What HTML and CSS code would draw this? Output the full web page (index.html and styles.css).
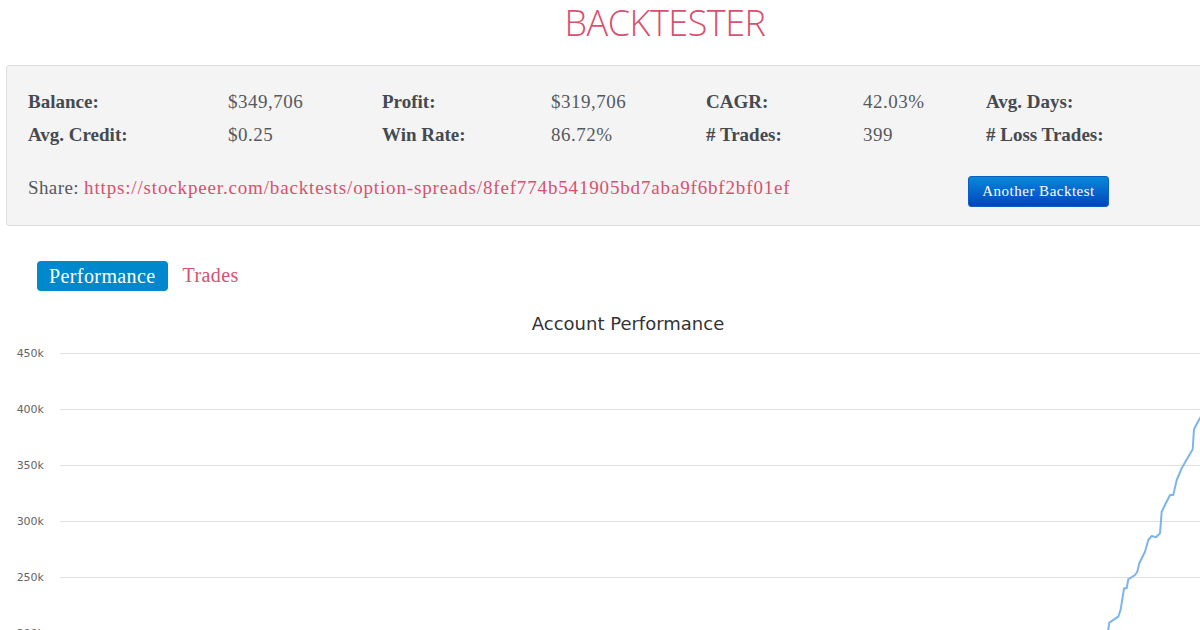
FILE: index.html
```html
<!DOCTYPE html>
<html>
<head>
<meta charset="utf-8">
<link rel="stylesheet" href="styles.css">
</head>
<body>
<div class="page">
  <h1 class="title">BACKTESTER</h1>
  <section class="panel">
    <div class="stats">
      <span class="lbl">Balance:</span><span class="val">$349,706</span>
      <span class="lbl">Profit:</span><span class="val">$319,706</span>
      <span class="lbl">CAGR:</span><span class="val">42.03%</span>
      <span class="lbl">Avg. Days:</span><span class="val"></span>
      <span class="lbl">Avg. Credit:</span><span class="val">$0.25</span>
      <span class="lbl">Win Rate:</span><span class="val">86.72%</span>
      <span class="lbl"># Trades:</span><span class="val">399</span>
      <span class="lbl"># Loss Trades:</span><span class="val"></span>
    </div>
    <div class="share-row">
      <div class="share">Share: <a class="link" href="#">https://stockpeer.com/backtests/option-spreads/8fef774b541905bd7aba9f6bf2bf01ef</a></div>
      <button class="btn">Another Backtest</button>
    </div>
  </section>
  <nav class="tabs">
    <span class="tab active">Performance</span>
    <span class="tab">Trades</span>
  </nav>
  <div class="chart">
    <svg width="1200" height="330" viewBox="0 0 1200 330">
      <text class="ctitle" x="628" y="30" text-anchor="middle">Account Performance</text>
      <g class="grid">
        <line x1="60" y1="53.5" x2="1200" y2="53.5"/>
        <line x1="60" y1="109.5" x2="1200" y2="109.5"/>
        <line x1="60" y1="165.5" x2="1200" y2="165.5"/>
        <line x1="60" y1="221.5" x2="1200" y2="221.5"/>
        <line x1="60" y1="277.5" x2="1200" y2="277.5"/>
        <line x1="60" y1="333.5" x2="1200" y2="333.5"/>
      </g>
      <g class="ylab">
        <text x="44" y="57" text-anchor="end">450k</text>
        <text x="44" y="113" text-anchor="end">400k</text>
        <text x="44" y="169" text-anchor="end">350k</text>
        <text x="44" y="225" text-anchor="end">300k</text>
        <text x="44" y="281" text-anchor="end">250k</text>
        <text x="44" y="337" text-anchor="end">200k</text>
      </g>
      <path class="series" d="M1108 332 L1108.3 329.3 L1109.3 322.7 L1118.3 316.7 L1120.7 309.3 L1124 288.3 L1126.7 288.3 L1128.3 279.3 L1135 275 L1137.3 271.7 L1139.3 263.3 L1145 251.7 L1148.3 240 L1151.7 236 L1156 237.3 L1160 233.3 L1161.7 211.7 L1165 205 L1170 195 L1173.3 195 L1176.7 180 L1181.7 168.3 L1188.3 156.7 L1192.7 149.3 L1194 129.3 L1196.7 124 L1200 118.3 L1203 113"/>
    </svg>
  </div>
</div>
</body>
</html>
```

FILE: styles.css
```css
html, body {
  margin: 0;
  padding: 0;
  background: #ffffff;
  overflow: hidden;
}
body {
  width: 1200px;
  height: 630px;
  font-family: "Liberation Serif", "DejaVu Serif", serif;
}
.page {
  width: 1260px;
}
.title {
  margin: 0;
  height: 65px;
  padding-top: 3px;
  box-sizing: border-box;
  width: 1200px;
  padding-left: 130px;
  text-align: center;
  font-family: "Open Sans", sans-serif;
  font-weight: 300;
  font-size: 36px;
  line-height: 40px;
  color: #d9506e;
  letter-spacing: -0.5px;
}
.panel {
  margin-left: 6px;
  width: 1240px;
  background: #f4f4f4;
  border: 1px solid #dddddd;
  border-radius: 3px;
  padding: 19px 0 20px 21px;
  box-sizing: border-box;
}
.stats {
  display: grid;
  grid-template-columns: 200px 154px 169px 155px 157px 123px 200px 100px;
  grid-auto-rows: 33px;
  align-items: center;
  font-size: 19px;
}
.lbl {
  font-weight: bold;
  color: #454a50;
}
.val {
  color: #55595e;
  letter-spacing: 0.5px;
}
.share-row {
  display: grid;
  grid-template-columns: 940px 200px;
  margin-top: 24px;
  height: 30px;
  align-items: center;
}
.share {
  font-size: 19px;
  color: #55595e;
  padding-bottom: 6px;
  white-space: nowrap;
  letter-spacing: 0.4px;
}
.link {
  color: #d9506e;
  text-decoration: none;
  letter-spacing: 0.84px;
}
.btn {
  width: 141px;
  height: 31px;
  border: 1px solid #0a5fc0;
  border-radius: 3px;
  background: linear-gradient(#0a88d8, #0045c0);
  color: #ffffff;
  font-family: "Liberation Serif", "DejaVu Serif", serif;
  font-size: 15px;
  letter-spacing: 0.5px;
  padding: 0;
  margin-top: 1px;
}
.tabs {
  display: flex;
  align-items: center;
  gap: 15px;
  margin: 34px 0 0 37px;
  height: 31px;
}
.tab {
  font-size: 20px;
  color: #d9506e;
  letter-spacing: 0.4px;
}
.tab.active {
  background: #0088cc;
  color: #ffffff;
  border-radius: 4px;
  height: 30px;
  line-height: 30px;
  padding: 0 12px 0 12px;
}
.chart {
  margin-top: 9px;
  height: 330px;
}
.chart svg {
  display: block;
}
.ctitle {
  font-family: "DejaVu Sans", sans-serif;
  font-size: 18px;
  fill: #333333;
}
.grid line {
  stroke: #e0e0e0;
  stroke-width: 1;
}
.ylab text {
  font-family: "DejaVu Sans", sans-serif;
  font-size: 11px;
  fill: #666666;
}
.series {
  fill: none;
  stroke: #7cb5ec;
  stroke-width: 2;
  stroke-linejoin: round;
}
```
